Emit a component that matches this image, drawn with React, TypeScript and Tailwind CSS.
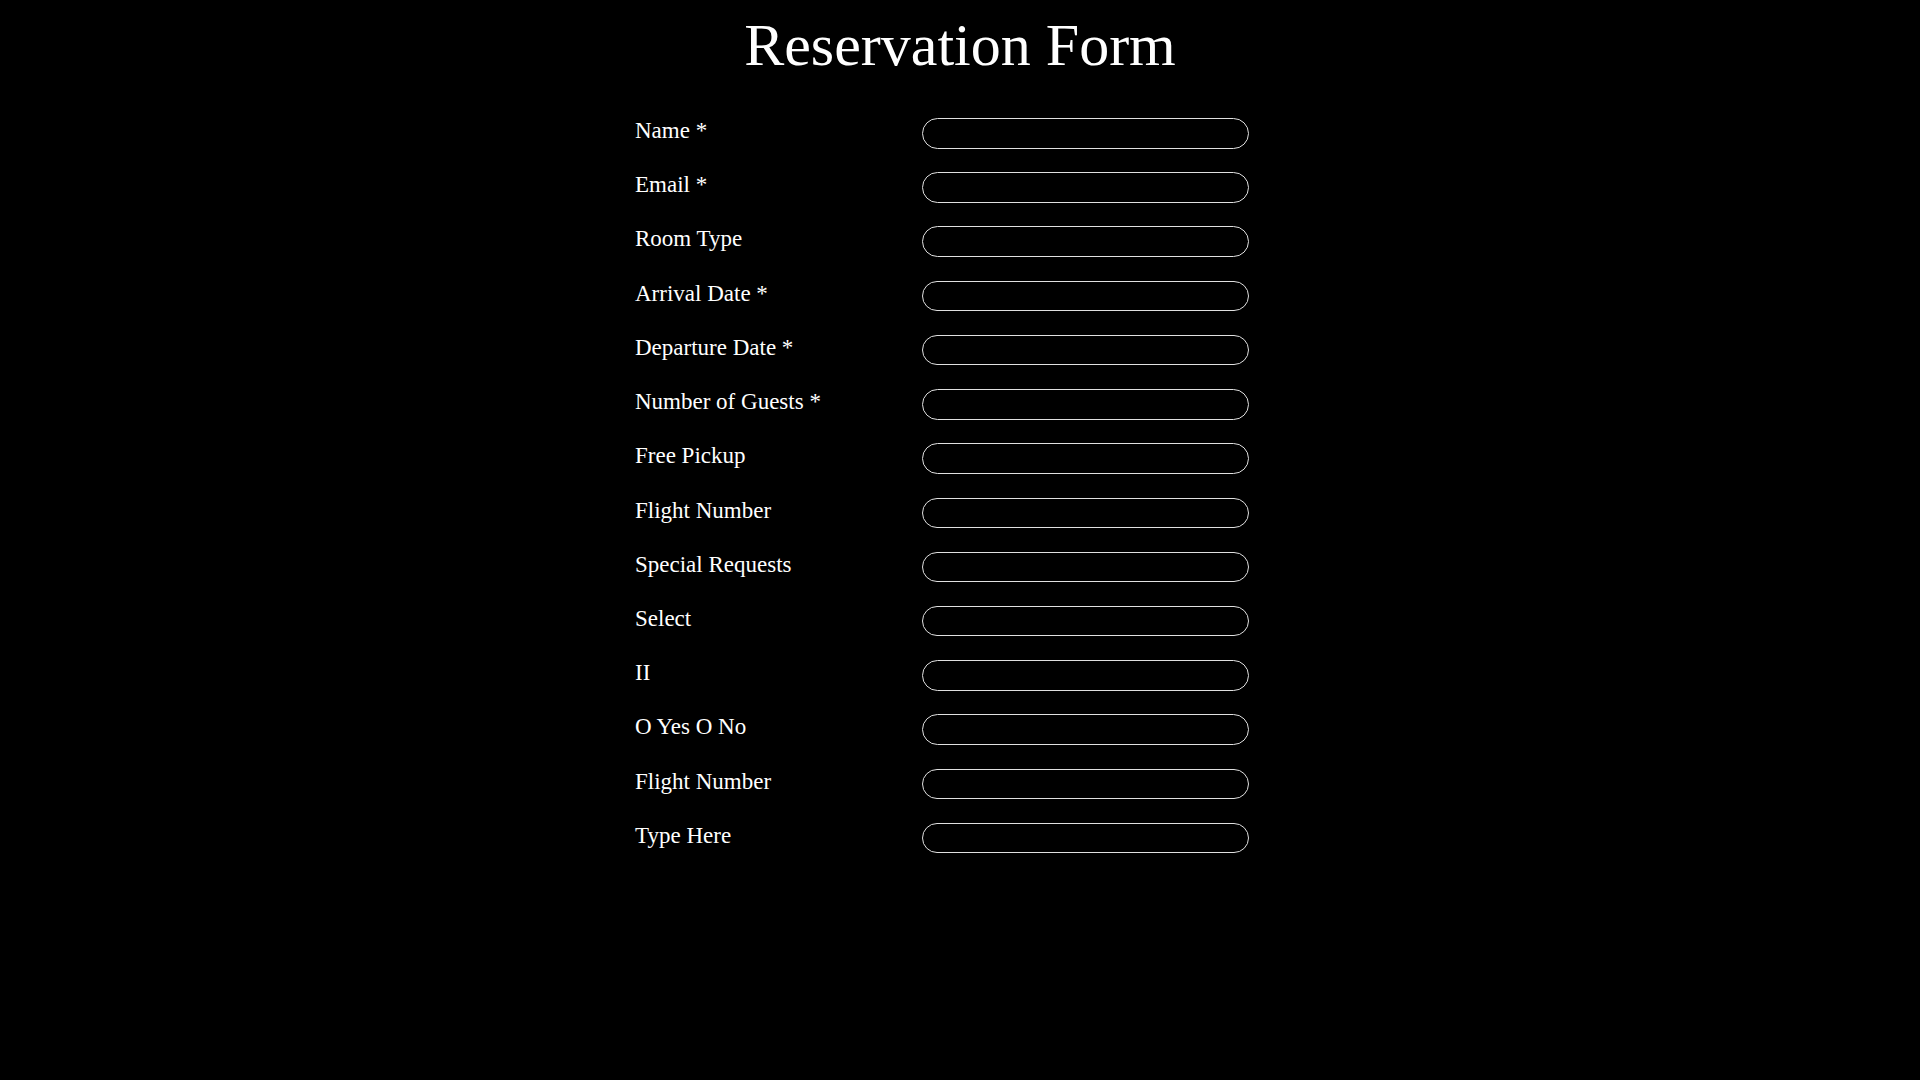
import React from 'react';

const fields = [
  'Name *',
  'Email *',
  'Room Type',
  'Arrival Date *',
  'Departure Date *',
  'Number of Guests *',
  'Free Pickup',
  'Flight Number',
  'Special Requests',
  'Select',
  'II',
  'O Yes O No',
  'Flight Number',
  'Type Here',
];

export default function App() {
  return (
    <div className="min-h-screen w-full bg-black text-white font-['Liberation_Serif','Times_New_Roman',serif]">
      {/* Titulo */}
      <h1 className="pt-[11px] text-center text-[60px] leading-[69px] font-normal">Reservation Form</h1>

      {/* Formulario */}
      <form className="mx-auto mt-[38px] w-[650px] flex flex-col">
        {fields.map((label, i) => (
          <div key={i} className="flex items-start mb-[23.73px]">
            <label className="w-[287px] shrink-0 text-[23px] leading-[26.4px]">{label}</label>
            <input
              type="text"
              className="w-[327px] h-[30.5px] rounded-full border border-[#e0e0e0] bg-black px-3 text-white outline-none"
            />
          </div>
        ))}
      </form>
    </div>
  );
}
